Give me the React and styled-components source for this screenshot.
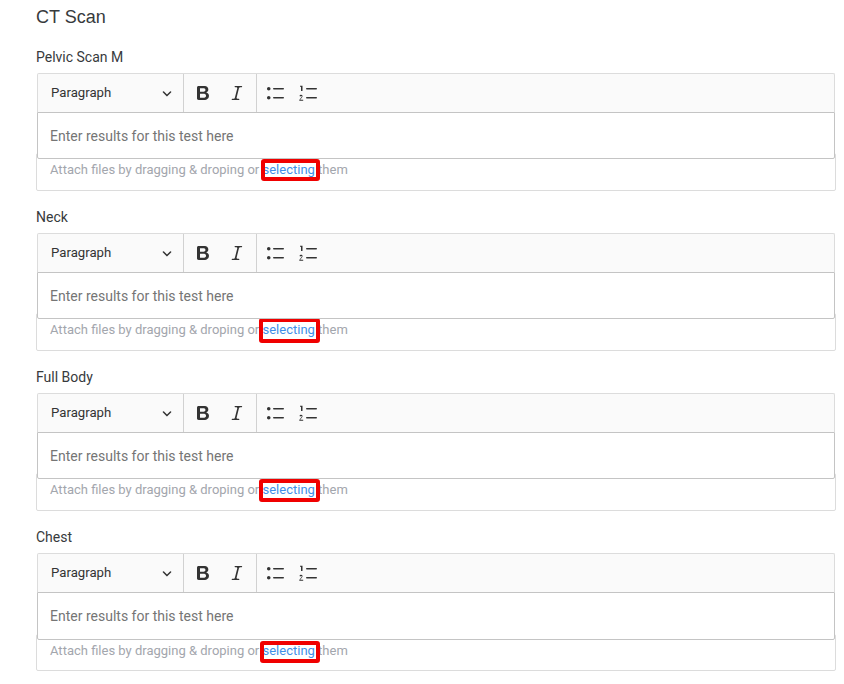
import React from 'react';
import styled, { createGlobalStyle } from 'styled-components';

const GlobalStyle = createGlobalStyle`
  html, body {
    margin: 0;
    padding: 0;
    background: #fff;
    overflow: hidden;
  }
`;

const Page = styled.div`
  width: 844px;
  box-sizing: border-box;
  padding: 7px 8px 0 36px;
  font-family: Roboto, 'Liberation Sans', Arial, sans-serif;
  color: #333;
`;

const Title = styled.h2`
  margin: 0 0 20px;
  font-family: 'Liberation Sans', Arial, sans-serif;
  font-size: 18px;
  font-weight: 400;
  line-height: 20px;
  color: #373a3c;
`;

const Section = styled.section`
  display: flex;
  flex-direction: column;
  height: 160px;
`;

const Label = styled.label`
  flex: none;
  font-size: 14px;
  line-height: 20px;
  height: 26px;
  color: #373a3c;
`;

const Editor = styled.div`
  position: relative;
  z-index: 1;
  margin: 0 1px;
  background: #fff;
`;

const Toolbar = styled.div`
  display: flex;
  align-items: stretch;
  height: 38px;
  background: #fafafa;
  border: 1px solid #dcdcdc;
  border-bottom: none;
  border-radius: 2px 2px 0 0;
`;

const Dropdown = styled.div`
  display: flex;
  align-items: center;
  justify-content: space-between;
  box-sizing: border-box;
  width: 146px;
  padding: 0 11px 2px 13px;
  border-right: 1px solid #d1d1d1;
  font-size: 13.2px;
  color: #333;
`;

const ToolGroup = styled.div`
  display: flex;
  align-items: center;
  gap: ${({ $gap }) => $gap}px;
  padding: 0 ${({ $pad }) => $pad}px;
  border-right: ${({ $divider }) => ($divider ? '1px solid #d1d1d1' : 'none')};
`;

const Icon = styled.svg`
  display: block;
  width: 20px;
  height: 20px;
  fill: #333;
`;

const Chevron = styled.svg`
  display: block;
  width: 10px;
  height: 10px;
  margin-top: 2px;
  fill: #333;
`;

const Editable = styled.div`
  box-sizing: border-box;
  height: ${({ $tall }) => ($tall ? 48 : 47)}px;
  padding: 0 12px;
  display: flex;
  align-items: center;
  border: 1px solid #c4c4c4;
  border-radius: 0 0 2px 2px;
  background: #fff;
  font-size: 14px;
  color: #757575;
`;

const DropZone = styled.div`
  box-sizing: border-box;
  height: ${({ $tall }) => ($tall ? 37 : 38)}px;
  margin-top: -6px;
  padding: 7px 13px 0;
  border: 1px solid #dcdcdc;
  border-radius: 2px;
  font-size: 13px;
  line-height: 18px;
  color: #a3a6ad;
`;

const SelectLink = styled.span`
  position: relative;
  color: #3f8fe8;
`;

const Highlight = styled.span`
  position: absolute;
  top: ${({ $top }) => $top}px;
  bottom: ${({ $bottom }) => $bottom}px;
  left: ${({ $left }) => $left}px;
  right: -5px;
  border: 4px solid #f00000;
  border-radius: 3px;
`;

const BoldIcon = () => (
  <Icon viewBox="0 0 20 20">
    <path d="M10.187 17H5.773c-.637 0-1.092-.138-1.364-.415-.273-.277-.409-.718-.409-1.323V4.738c0-.617.14-1.062.419-1.332.279-.27.73-.406 1.354-.406h4.68c.69 0 1.288.041 1.793.124.506.083.96.242 1.36.478.341.197.644.447.906.75a3.262 3.262 0 0 1 .808 2.162c0 1.401-.722 2.426-2.167 3.075C15.05 10.175 16 11.315 16 13.01a3.756 3.756 0 0 1-2.296 3.504 6.1 6.1 0 0 1-1.517.377c-.571.073-1.238.11-2 .11zm-.217-6.217H7v4.087h3.069c1.977 0 2.965-.69 2.965-2.072 0-.707-.256-1.22-.768-1.537-.512-.319-1.277-.478-2.296-.478zM7 5.13v3.619h2.606c.729 0 1.292-.067 1.69-.2a1.6 1.6 0 0 0 .91-.765c.165-.267.247-.566.247-.897 0-.707-.26-1.176-.778-1.409-.519-.232-1.31-.348-2.375-.348H7z" />
  </Icon>
);

const ItalicIcon = () => (
  <Icon viewBox="0 0 20 20">
    <path d="m9.586 14.633.021.004c-.036.335.095.655.393.962.082.083.173.15.274.201h1.474a.6.6 0 1 1 0 1.2H5.304a.6.6 0 0 1 0-1.2h1.15c.474-.07.809-.182 1.005-.334.157-.122.291-.32.404-.597l2.416-9.55a1.053 1.053 0 0 0-.281-.823 1.12 1.12 0 0 0-.442-.296H8.15a.6.6 0 0 1 0-1.2h6.443a.6.6 0 1 1 0 1.2h-1.195c-.376.056-.65.155-.823.296-.215.175-.423.439-.623.79l-2.366 9.347z" />
  </Icon>
);

const BulletIcon = () => (
  <Icon viewBox="0 0 20 20">
    <path d="M7 5.75c0 .414.336.75.75.75h9.5a.75.75 0 1 0 0-1.5h-9.5a.75.75 0 0 0-.75.75zm-6 0C1 4.784 1.777 4 2.75 4c.966 0 1.75.777 1.75 1.75 0 .966-.777 1.75-1.75 1.75C1.784 7.5 1 6.723 1 5.75zm6 9c0 .414.336.75.75.75h9.5a.75.75 0 1 0 0-1.5h-9.5a.75.75 0 0 0-.75.75zm-6 0c0-.966.777-1.75 1.75-1.75.966 0 1.75.777 1.75 1.75 0 .966-.777 1.75-1.75 1.75-.966 0-1.75-.777-1.75-1.75z" />
  </Icon>
);

const NumberIcon = () => (
  <Icon viewBox="0 0 20 20">
    <path d="M7 5.75c0 .414.336.75.75.75h9.5a.75.75 0 1 0 0-1.5h-9.5a.75.75 0 0 0-.75.75zM3.5 3v5H2V3.7H1v-1h2.5V3zM.343 17.857l2.59-3.257c2.003-2.65-1.493-3.92-2.53-1.6l1.19.5c.4-.8 1.4-.4 1.1.2l-2.4 3.257v.9h3.9v-1.1H.343zM7 14.75c0 .414.336.75.75.75h9.5a.75.75 0 1 0 0-1.5h-9.5a.75.75 0 0 0-.75.75z" />
  </Icon>
);

const tests = [
  { name: 'Pelvic Scan M', top: -3, bottom: -4, left: -2 },
  { name: 'Neck', top: -4, bottom: -6, left: -4 },
  { name: 'Full Body', top: -3, bottom: -5, left: -4 },
  { name: 'Chest', top: -2, bottom: -5, left: -3, tall: true },
];

const TestEditor = ({ test }) => (
  <Section>
    <Label>{test.name}</Label>
    <Editor>
      <Toolbar>
        <Dropdown>
          Paragraph
          <Chevron viewBox="0 0 10 10">
            <path d="M.941 4.523a.75.75 0 1 1 1.06-1.06l3.006 3.005 3.005-3.005a.75.75 0 1 1 1.06 1.06l-3.549 3.55a.75.75 0 0 1-1.168-.136L.941 4.523z" />
          </Chevron>
        </Dropdown>
        <ToolGroup $divider $gap={14} $pad={9}>
          <BoldIcon />
          <ItalicIcon />
        </ToolGroup>
        <ToolGroup $gap={13} $pad={9}>
          <BulletIcon />
          <NumberIcon />
        </ToolGroup>
      </Toolbar>
      <Editable $tall={test.tall}>Enter results for this test here</Editable>
    </Editor>
    <DropZone $tall={test.tall}>
      Attach files by dragging &amp; droping or{' '}
      <SelectLink>
        selecting
        <Highlight $top={test.top} $bottom={test.bottom} $left={test.left} />
      </SelectLink>{' '}
      them
    </DropZone>
  </Section>
);

const App = () => (
  <Page>
    <GlobalStyle />
    <Title>CT Scan</Title>
    {tests.map((test) => (
      <TestEditor key={test.name} test={test} />
    ))}
  </Page>
);

export default App;
